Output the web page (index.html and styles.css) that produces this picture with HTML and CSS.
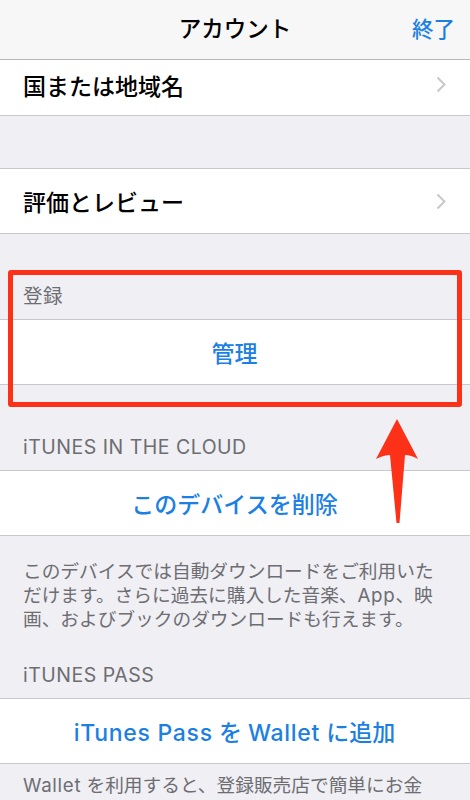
FILE: index.html
```html
<!DOCTYPE html>
<html lang="ja">
<head>
<meta charset="utf-8">
<title>アカウント</title>
<link rel="stylesheet" href="styles.css">
</head>
<body>
<div class="screen">
  <header class="nav">
    <div class="nav-title">アカウント</div>
    <div class="nav-done">終了</div>
  </header>

  <div class="row row--clipped">
    <span class="row-label">国または地域名</span>
    <svg class="chevron" viewBox="0 0 10 17" width="10" height="17"><path d="M1.5 1.5 L8.5 8.5 L1.5 15.5" fill="none" stroke="#c7c7cc" stroke-width="2"/></svg>
  </div>

  <div class="spacer"></div>

  <div class="row row--top">
    <span class="row-label">評価とレビュー</span>
    <svg class="chevron" viewBox="0 0 10 17" width="10" height="17"><path d="M1.5 1.5 L8.5 8.5 L1.5 15.5" fill="none" stroke="#c7c7cc" stroke-width="2"/></svg>
  </div>

  <div class="section-header">登録</div>
  <div class="row row--top row--action"><span class="action">管理</span></div>

  <div class="section-header">iTUNES IN THE CLOUD</div>
  <div class="row row--top row--action"><span class="action">このデバイスを削除</span></div>
  <p class="footer">このデバイスでは自動ダウンロードをご利用いただけます。さらに過去に購入した音楽、<span class="latin">App</span>、映画、およびブックのダウンロードも行えます。</p>

  <div class="section-header section-header--after-footer">iTUNES PASS</div>
  <div class="row row--top row--action"><span class="action"><span class="latin">iTunes Pass</span> を <span class="latin">Wallet</span> に追加</span></div>
  <p class="footer footer--tight"><span class="latin">Wallet</span> を利用すると、登録販売店で簡単にお金を支払えます。</p>

  <div class="highlight"></div>
  <svg class="arrow" viewBox="370 414 55 115" width="55" height="115">
    <path d="M397 419 L418 459 Q411 455 405 455 L399.5 523 L396.5 523 L390 455 Q384 455 376 459 Z" fill="#fc3118"/>
  </svg>
</div>
</body>
</html>
```
FILE: styles.css
```css
* { box-sizing: border-box; }

html, body {
  margin: 0;
  padding: 0;
  background: #efeff4;
}

body {
  font-family: Inter, "Noto Sans CJK JP", sans-serif;
  overflow: hidden;
}

.screen {
  position: relative;
  width: 470px;
  height: 800px;
  overflow: hidden;
  background: #efeff4;
}

.nav {
  height: 60px;
  background: #f7f7f7;
  border-bottom: 1px solid #b9b9bd;
  display: flex;
  align-items: center;
  justify-content: center;
  padding-bottom: 6px;
  position: relative;
}

.nav-title {
  font-size: 22.5px;
  font-weight: 500;
  color: #000;
}

.nav-done {
  position: absolute;
  right: 15px;
  top: 0;
  height: 54px;
  display: flex;
  align-items: center;
  font-size: 21.5px;
  font-weight: 500;
  color: #1c7fe3;
}

.row {
  background: #fff;
  border-bottom: 1px solid #c8c7cc;
  height: 66px;
  display: flex;
  align-items: center;
  padding: 0 24px 0 23px;
}

.row--top { border-top: 1px solid #c8c7cc; }

.row--clipped {
  height: 56px;
  padding-bottom: 6px;
}

.row-label {
  flex: 1;
  font-size: 23px;
  font-weight: 500;
  color: #000;
}

.chevron { display: block; }

.row--action { justify-content: center; }

.action {
  font-size: 23px;
  font-weight: 500;
  color: #1c7fe3;
}

.latin { letter-spacing: 0.7px; }

.spacer { height: 52px; }

.section-header {
  height: 85px;
  padding: 0 23px 12px;
  display: flex;
  align-items: flex-end;
  line-height: 22px;
  font-size: 19.5px;
  letter-spacing: 0.5px;
  color: #6d6d72;
}

.section-header--after-footer { height: 66px; }

.footer {
  margin: 0;
  padding: 24px 23px 0;
  font-size: 18.7px;
  line-height: 24px;
  color: #6d6d72;
}

.footer--tight {
  padding-top: 10px;
  padding-right: 30px;
}

.highlight {
  position: absolute;
  left: 8px;
  top: 270px;
  width: 454px;
  height: 137px;
  border: 5px solid #fc3118;
  border-radius: 3px;
}

.arrow {
  position: absolute;
  left: 370px;
  top: 414px;
}
```
